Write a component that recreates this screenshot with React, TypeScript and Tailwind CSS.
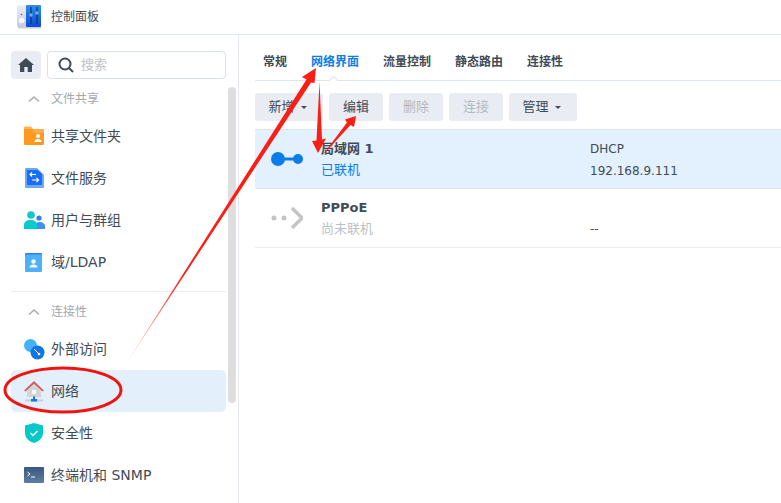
const cjk = "font-['DejaVu_Sans','Noto_Sans_CJK_SC',sans-serif]";

function ControlPanelIcon() {
  return (
    <svg width="24" height="24" viewBox="0 0 24 24" className="shrink-0">
      <defs>
        <linearGradient id="cpBlue" x1="0" y1="0" x2="0" y2="1">
          <stop offset="0" stopColor="#2f8fe4" />
          <stop offset="1" stopColor="#0a4ad8" />
        </linearGradient>
        <linearGradient id="cpGray" x1="0" y1="0" x2="0" y2="1">
          <stop offset="0" stopColor="#eceef4" />
          <stop offset="1" stopColor="#c5c9de" />
        </linearGradient>
      </defs>
      <rect x="0" y="0" width="10" height="22" rx="1.5" fill="url(#cpGray)" />
      <circle cx="4.5" cy="15.5" r="2.8" fill="#f7f7fa" />
      <circle cx="4.5" cy="9.5" r="0.8" fill="#667" />
      <rect x="9" y="0" width="15" height="22" rx="1" fill="url(#cpBlue)" />
      <path d="M14 2v17M20 2v17" stroke="#0b2f7a" strokeWidth="1.2" />
      <circle cx="14" cy="10" r="1.7" fill="#6ab0f2" />
      <circle cx="20" cy="8" r="1.7" fill="#6ab0f2" />
      <rect x="1" y="22" width="23" height="1.5" fill="#c9cbd6" />
    </svg>
  );
}

function FolderIcon() {
  return (
    <svg width="20" height="20" viewBox="0 0 20 20">
      <path d="M0 1.5A1 1 0 0 1 1 .5h6l2 2.5H0z" fill="#fdb45c" />
      <path d="M0 3h19a1 1 0 0 1 1 1v14a1 1 0 0 1-1 1H1a1 1 0 0 1-1-1z" fill="#fc9a1f" />
      <path d="M9 3h10a1 1 0 0 1 1 1v3H9z" fill="#fdb45c" opacity=".7" />
      <circle cx="14" cy="10" r="2" fill="#fff" />
      <path d="M10.5 16c0-2 1.5-3 3.5-3s3.5 1 3.5 3z" fill="#fff" />
    </svg>
  );
}

function FileServiceIcon() {
  return (
    <svg width="19" height="20" viewBox="0 0 19 20">
      <path d="M0 1a1 1 0 0 1 1-1h11l7 7v12a1 1 0 0 1-1 1H1a1 1 0 0 1-1-1z" fill="#6aa9f8" />
      <path d="M2 2h11l4 4v10a1 1 0 0 1-1 1H3a1 1 0 0 1-1-1z" fill="#1a6ef5" />
      <path d="M11 6.5H5m2-2-2 2 2 2M7 12h6.5m-2-2 2 2-2 2" stroke="#fff" strokeWidth="1.2" fill="none" />
    </svg>
  );
}

function UsersIcon() {
  return (
    <svg width="21" height="18" viewBox="0 0 21 18">
      <circle cx="15" cy="7" r="2.6" fill="#2b7ff0" />
      <path d="M11 18v-3c0-2.5 2-4 4.5-4S21 12.5 21 15v3z" fill="#3f8ff5" />
      <circle cx="7" cy="4" r="3.8" fill="#13c7c9" />
      <path d="M0 18v-4c0-3 2.5-5 6.5-5S13 11 13 14v4z" fill="#04cdcd" />
    </svg>
  );
}

function LdapIcon() {
  return (
    <svg width="18" height="19" viewBox="0 0 18 19">
      <rect x="0" y="0" width="17" height="4" rx="1" fill="#2b7ff0" />
      <rect x="0" y="1.5" width="17" height="17.5" rx="1" fill="#4db1fa" />
      <circle cx="8.5" cy="8.5" r="2.2" fill="#fff" />
      <path d="M4.5 14.5c0-2 1.8-3 4-3s4 1 4 3z" fill="#fff" />
    </svg>
  );
}

function ExternalIcon() {
  return (
    <svg width="21" height="21" viewBox="0 0 21 21">
      <circle cx="6.5" cy="6.5" r="6.5" fill="#45b0fb" />
      <circle cx="13.5" cy="13.5" r="7" fill="#1273ea" />
      <path d="M10 10l4.5 4.5" stroke="#fff" strokeWidth="1" />
      <circle cx="15" cy="15" r="1.3" fill="#fff" />
    </svg>
  );
}

function NetworkIcon() {
  return (
    <svg width="20" height="21" viewBox="0 0 20 21">
      <path d="M0 9.5 10 0l10 9.5-1.5 1L10 3 1.5 10.5z" fill="#d0605c" />
      <path d="M3 9.5 10 3.5l7 6V16H3z" fill="#d3d4d6" />
      <rect x="8" y="9" width="4" height="4" fill="#fff" />
      <rect x="1" y="18.5" width="18" height="2" fill="#c9d0d6" />
      <rect x="9" y="15.500" width="2" height="3" fill="#1a73e8" />
      <rect x="7" y="18" width="6" height="2.5" fill="#1a73e8" />
    </svg>
  );
}

function ShieldIcon() {
  return (
    <svg width="18" height="20" viewBox="0 0 18 20">
      <path d="M9 0 18 2.5V10c0 5-4 8.5-9 10-5-1.5-9-5-9-10V2.5z" fill="#05c8c8" />
      <path d="M5.5 10l2.5 2.5 4.5-4.5" stroke="#fff" strokeWidth="1.5" fill="none" />
    </svg>
  );
}

function TerminalIcon() {
  return (
    <svg width="20" height="16" viewBox="0 0 20 16">
      <defs>
        <linearGradient id="termBg" x1="0" y1="0" x2="0" y2="1">
          <stop offset="0" stopColor="#37597f" />
          <stop offset="1" stopColor="#5d7fa3" />
        </linearGradient>
      </defs>
      <rect width="20" height="16" rx="1" fill="url(#termBg)" />
      <path d="M3.5 5l2.5 2-2.5 2" stroke="#fff" strokeWidth="1" fill="none" />
      <path d="M7 10h4" stroke="#fff" strokeWidth="1" />
    </svg>
  );
}

function SectionHead({ label }: { label: string }) {
  return (
    <div className="flex items-center h-[24px] pl-[17px]">
      <svg width="12" height="8" viewBox="0 0 12 8" className="mr-[11px]">
        <path d="M1 6.5 6 2l5 4.5" stroke="#a6adb5" strokeWidth="1.5" fill="none" />
      </svg>
      <span className="text-[12px] text-[#a3a8ad]">{label}</span>
    </div>
  );
}

function SideItem({ icon, label, active }: { icon: React.ReactNode; label: string; active?: boolean }) {
  return (
    <div className={`flex items-center h-[42px] rounded-[5px] ${active ? "bg-[#e3f0fc]" : ""}`}>
      <div className="w-[40px] pl-[6px] flex justify-center shrink-0">{icon}</div>
      <span className="text-[14px] text-[#414b55]">{label}</span>
    </div>
  );
}

function Btn({ label, caret, disabled, width }: { label: string; caret?: boolean; disabled?: boolean; width: string }) {
  return (
    <div className={`flex items-center justify-center gap-[6px] h-[28px] rounded-[3px] bg-[#e9edf3] text-[13px] ${width} ${caret ? "pr-[3px]" : ""} ${disabled ? "text-[#b3b8bf]" : "text-[#414b55]"}`}>
      {label}
      {caret && <span className="w-0 h-0 border-x-[3.5px] border-x-transparent border-t-[3.5px] border-t-[#414b55]" />}
    </div>
  );
}

export default function App() {
  return (
    <div className={`relative w-[781px] h-[503px] overflow-hidden bg-white ${cjk}`}>
      <header className="flex items-center h-[35px] pl-[17px] gap-[10px] border-b border-[#e1e7ef]">
        <ControlPanelIcon />
        <span className="text-[12px] text-[#414b55]">控制面板</span>
      </header>

      <div className="flex h-[468px]">
        <aside className="relative w-[239px] shrink-0 border-r border-[#e5e9ef] pl-[11px] pr-[12px] pt-[16px]">
          <div className="flex gap-[6px] mb-[8px]">
            <div className="flex items-center justify-center w-[30px] h-[28px] rounded-[4px] bg-[#e9edf3]">
              <svg width="16" height="14" viewBox="0 0 16 14">
                <path d="M8 0 16 7h-2v7H9.7V9H6.3v5H2V7H0z" fill="#414b55" />
              </svg>
            </div>
            <div className="flex items-center flex-1 h-[28px] rounded-[4px] border border-[#d9e0e8] pl-[10px] gap-[7px]">
              <svg width="16" height="16" viewBox="0 0 16 16">
                <circle cx="7" cy="7" r="5.5" stroke="#414b55" strokeWidth="2" fill="none" />
                <path d="M11 11l4 4" stroke="#414b55" strokeWidth="2" />
              </svg>
              <span className="text-[13px] text-[#bcc1c7]">搜索</span>
            </div>
          </div>
          <SectionHead label="文件共享" />
          <div className="mt-[4px]">
            <SideItem icon={<FolderIcon />} label="共享文件夹" />
            <SideItem icon={<FileServiceIcon />} label="文件服务" />
            <SideItem icon={<UsersIcon />} label="用户与群组" />
            <SideItem icon={<LdapIcon />} label="域/LDAP" />
          </div>
          <div className="h-px bg-[#e9ecef] mt-[8px] mb-[8px]" />
          <SectionHead label="连接性" />
          <div className="mt-[4px]">
            <SideItem icon={<ExternalIcon />} label="外部访问" />
            <SideItem icon={<NetworkIcon />} label="网络" active />
            <SideItem icon={<ShieldIcon />} label="安全性" />
            <SideItem icon={<TerminalIcon />} label="终端机和 SNMP" />
          </div>
          <div className="absolute right-[2px] top-[52px] w-[8px] h-[316px] rounded-full bg-[#dedede]" />
        </aside>

        <main className="flex-1 pl-[16px]">
          <nav className="relative flex h-[46px] items-center pl-[8px] gap-[24px] border-b border-[#dde4ec] pb-[5px] pt-[14px] mb-[12px] text-[12px] font-bold text-[#414b55]">
            <span>常规</span>
            <span className="text-[#0a7de8]">网络界面</span>
            <span>流量控制</span>
            <span>静态路由</span>
            <span>连接性</span>
            <span className="absolute left-[75px] bottom-[-4px] w-[7px] h-[7px] rotate-45 bg-white border-l border-t border-[#dde4ec]" />
          </nav>
          <div className="flex gap-[6px] mb-[8px]">
            <Btn label="新增" caret width="w-[68px]" />
            <Btn label="编辑" width="w-[54px]" />
            <Btn label="删除" disabled width="w-[54px]" />
            <Btn label="连接" disabled width="w-[54px]" />
            <Btn label="管理" caret width="w-[68px]" />
          </div>
          <div className="flex h-[60px] items-stretch bg-[#e3f0fd] border-y border-[#dde4ec]">
            <div className="w-[66px] flex items-center pl-[16px]">
              <svg width="32" height="14" viewBox="0 0 32 14">
                <path d="M10 7h16" stroke="#0a7de8" strokeWidth="3" />
                <circle cx="7" cy="7" r="7" fill="#0a7de8" />
                <circle cx="27" cy="7" r="5" fill="#0a7de8" />
              </svg>
            </div>
            <div className="w-[269px] pt-[10px]">
              <div className="h-[19px] text-[13px] font-bold leading-[18px] text-[#414b55]">局域网 1</div>
              <div className="mt-[2px] text-[13px] leading-[18px] text-[#0a7de8]">已联机</div>
            </div>
            <div className="pt-[10px] text-[12px] text-[#414b55]">
              <div className="h-[19px] leading-[18px]">DHCP</div>
              <div className="mt-[3px] leading-[18px]">192.168.9.111</div>
            </div>
          </div>
          <div className="flex h-[59px] items-stretch border-b border-[#e9edf3]">
            <div className="w-[66px] flex items-center pl-[16px]">
              <svg width="32" height="24" viewBox="0 0 32 24">
                <circle cx="3" cy="12" r="2.5" fill="#c2c4c7" />
                <circle cx="13" cy="12" r="2.5" fill="#c2c4c7" />
                <path d="M21 2l10 10-10 10" stroke="#c2c4c7" strokeWidth="3.5" fill="none" />
              </svg>
            </div>
            <div className="w-[269px] pt-[10px]">
              <div className="h-[19px] text-[13px] font-bold leading-[18px] text-[#414b55]">PPPoE</div>
              <div className="mt-[2px] text-[13px] leading-[18px] text-[#bcc1c7]">尚未联机</div>
            </div>
            <div className="pt-[31px] text-[12px] leading-[18px] text-[#414b55]">--</div>
          </div>
        </main>
      </div>

      <svg width="781" height="503" viewBox="0 0 781 503" className="absolute left-0 top-0 pointer-events-none">
        <defs>
          <linearGradient id="arrowFade" gradientUnits="userSpaceOnUse" x1="124" y1="367" x2="185" y2="275">
            <stop offset="0" stopColor="#fa1e14" stopOpacity="0.1" />
            <stop offset="1" stopColor="#fa1e14" />
          </linearGradient>
        </defs>
        <ellipse cx="63" cy="390" rx="58" ry="22" fill="none" stroke="#f01410" strokeWidth="3" />
        <path d="M124 367 306.5 79.500 302 77 316 68 314.5 83 311 82.5z" fill="url(#arrowFade)" />
        <path d="M319.5 82 322 139.5 326 138.5 318 153 312 141 316.5 140.5z" fill="#fa1e14" />
        <path d="M322 156 347 122.5 345 119.5 356 116 354 127 350.5 125z" fill="#fa1e14" />
      </svg>
    </div>
  );
}
